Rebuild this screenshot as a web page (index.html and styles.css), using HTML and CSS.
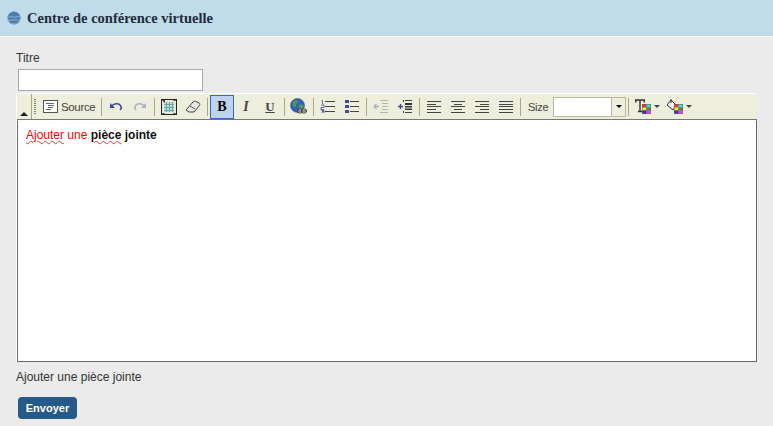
FILE: index.html
```html
<!DOCTYPE html>
<html lang="fr">
<head>
<meta charset="utf-8">
<title>Centre de conférence virtuelle</title>
<link rel="stylesheet" href="styles.css">
</head>
<body>
<header class="banner">
  <svg class="globe" width="14" height="14" viewBox="0 0 14 14"><circle cx="7" cy="7" r="6.500" fill="#4a7fb0"/><path d="M.8 6c3-.8 5 .5 8 0s3-.8 4.500-.4M.8 9c3 .8 6-.6 8.500 0s3 .4 4-.2" stroke="#8fb4d4" fill="none" stroke-width="1"/><path d="M3 12c2 .8 5 .8 8 0" stroke="#7ea6c8" fill="none"/></svg>
  <h1 class="banner-title">Centre de conférence virtuelle</h1>
</header>
<main class="content">
  <label class="field-label" for="titre">Titre</label>
  <input class="title-input" id="titre" type="text">
  <div class="editor">
    <div class="toolbar">
      <span class="collapser"><span class="collapse-arrow"></span></span>
      <span class="grip"></span>
      <span class="tool tool-source">
        <svg width="15" height="13" viewBox="0 0 15 13"><rect x=".5" y=".5" width="14" height="12" fill="#fff" stroke="#555"/><path d="M3 3.500h8M5 5.500h6M5 7.500h5M3 9.500h5" stroke="#666"/></svg>
        <span class="tool-text">Source</span>
      </span>
      <span class="sep"></span>
      <span class="tool"><svg width="14" height="12" viewBox="0 0 14 12"><path d="M1 2v5h5z" fill="#3b4aa0"/><path d="M3 5c2-2.500 6-3 8-1 1.500 1.500 1.500 3.500 0 5" fill="none" stroke="#3b4aa0" stroke-width="1.600"/></svg></span>
      <span class="tool"><svg width="14" height="12" viewBox="0 0 14 12"><path d="M13 2v5H8z" fill="#a9b0c4"/><path d="M11 5C9 2.500 5 2 3 4c-1.500 1.500-1.500 3.500 0 5" fill="none" stroke="#a9b0c4" stroke-width="1.600"/></svg></span>
      <span class="sep"></span>
      <span class="tool"><svg width="16" height="16" viewBox="0 0 16 16"><rect x=".5" y=".5" width="15" height="15" fill="#e8e8e0" stroke="#222"/><rect x="3" y="3" width="10" height="10" fill="#bfe0d8"/><path d="M3 5.500h10M3 8.500h10M3 11.500h10M5.500 3v10M8.500 3v10M11.500 3v10" stroke="#6aa8a8"/><path d="M1.500 1.500h2v2M12.500 1.500h2M1.500 14.500h2M12.500 14.500h2" stroke="#333"/></svg></span>
      <span class="tool"><svg width="16" height="16" viewBox="0 0 16 16"><path d="M1 11l7-8c1-1 2-1 3-.5l3 1.500c1 .7 1 1.500.5 2.500L9 13H4z" fill="#e6e6e0" stroke="#444"/><path d="M5 7l5 3" stroke="#555"/></svg></span>
      <span class="sep"></span>
      <span class="tool tool-on tool-bold">B</span>
      <span class="tool tool-italic">I</span>
      <span class="tool tool-underline">U</span>
      <span class="sep"></span>
      <span class="tool"><svg width="18" height="18" viewBox="0 0 18 18"><circle cx="7.500" cy="7.500" r="7" fill="#2f5fc0" stroke="#555" stroke-width=".6"/><path d="M3 4c2-2 4-2 5-1 0 2-2 2-2 4s-2 3-3 1zM9 7c2-1 4 0 5 1-1 3-3 4-4 3s-2-3-1-4z" fill="#4aa04a"/><rect x="7.500" y="11" width="5" height="4" rx="2" fill="#eeeedc" stroke="#333"/><rect x="11.500" y="11" width="5" height="4" rx="2" fill="#eeeedc" stroke="#333"/><path d="M8 13h8" stroke="#333"/></svg></span>
      <span class="sep"></span>
      <span class="tool"><svg width="16" height="13" viewBox="0 0 16 13"><path d="M5 1.500h10M5 6.500h10M5 11.500h10" stroke="#444"/><path d="M1.500.5h1v3.500M1 5h3v2.500H1V9.800h3M1 10h3v1.200H2h2V13H1" stroke="#3b4aa0" fill="none" stroke-width=".8"/></svg></span>
      <span class="tool"><svg width="16" height="13" viewBox="0 0 16 13"><path d="M6 1.500h9M6 6.500h9M6 11.500h9" stroke="#444"/><path d="M1 0h4v3H1zM1 5h4v3H1zM1 10h4v3H1z" fill="#3b4aa0"/></svg></span>
      <span class="sep"></span>
      <span class="tool"><svg width="16" height="13" viewBox="0 0 16 13"><path d="M7 .5h8M9 3.500h6M9 6.500h6M9 9.500h6M7 12.500h8" stroke="#b5b8a8"/><path d="M1 6.500h5M3.500 4 1 6.500 3.500 9" stroke="#a9b0c4" fill="none" stroke-width="1.300"/></svg></span>
      <span class="tool"><svg width="16" height="13" viewBox="0 0 16 13"><path d="M8 .5h7M8 12.500h7" stroke="#444"/><path d="M8 3h7v7H8z" fill="#333"/><path d="M8 5.500h7M8 8h7" stroke="#eeeedc"/><path d="M1 6.500h5M3.500 4v5" stroke="#3b4aa0" stroke-width="1.400"/><path d="M6.500 0v2M6.500 11v2" stroke="#444"/></svg></span>
      <span class="sep"></span>
      <span class="tool"><svg width="16" height="12" viewBox="0 0 16 12"><path d="M1 .5h14M1 3.500h9M1 5.500h14M1 8.500h9M1 11.500h14" stroke="#444"/></svg></span>
      <span class="tool"><svg width="16" height="12" viewBox="0 0 16 12"><path d="M1 .5h14M4 3.500h8M1 5.500h14M4 8.500h8M1 11.500h14" stroke="#444"/></svg></span>
      <span class="tool"><svg width="16" height="12" viewBox="0 0 16 12"><path d="M1 .5h14M6 3.500h9M1 5.500h14M6 8.500h9M1 11.500h14" stroke="#444"/></svg></span>
      <span class="tool"><svg width="16" height="12" viewBox="0 0 16 12"><path d="M1 .5h14M1 3.500h14M1 5.500h14M1 8.500h14M1 11.500h14" stroke="#444"/></svg></span>
      <span class="sep"></span>
      <span class="size-label">Size</span>
      <span class="size-select"><span class="size-value"></span><span class="size-drop"><span class="drop-arrow"></span></span></span>
      <span class="sep"></span>
      <span class="tool tool-color">
        <svg width="16" height="18" viewBox="0 0 16 18"><path d="M0 2h10M.8 1.500V4.500M9.200 1.500V4.500M5 2v11M3 13.500h4" stroke="#333" stroke-width="1.400" fill="none"/><rect x="7" y="6" width="9" height="10" fill="#666"/><rect x="7.500" y="6.500" width="4" height="3" fill="#e33"/><rect x="11.500" y="6.500" width="4" height="3" fill="#3dd"/><rect x="7.500" y="9.500" width="4" height="3" fill="#ee3"/><rect x="11.500" y="9.500" width="4" height="3" fill="#585"/><rect x="7.500" y="12.500" width="4" height="3" fill="#33c"/><rect x="11.500" y="12.500" width="4" height="3" fill="#e4d"/></svg>
        <span class="drop-arrow arrow-small"></span>
      </span>
      <span class="tool tool-color">
        <svg width="16" height="18" viewBox="0 0 16 18"><path d="M0 7l4-5 5 5-3 5z" fill="#eee" stroke="#333"/><path d="M4 1v4" stroke="#333"/><rect x="7" y="6" width="9" height="10" fill="#666"/><rect x="7.500" y="6.500" width="4" height="3" fill="#e33"/><rect x="11.500" y="6.500" width="4" height="3" fill="#3dd"/><rect x="7.500" y="9.500" width="4" height="3" fill="#ee3"/><rect x="11.500" y="9.500" width="4" height="3" fill="#585"/><rect x="7.500" y="12.500" width="4" height="3" fill="#33c"/><rect x="11.500" y="12.500" width="4" height="3" fill="#e4d"/></svg>
        <span class="drop-arrow arrow-small"></span>
      </span>
    </div>
    <div class="edit-area">
      <span class="red"><span class="squiggle">Ajouter</span> une</span> <b class="strong"><span class="squiggle">pièce</span> jointe</b>
    </div>
  </div>
  <p class="attach-label">Ajouter une pièce jointe</p>
  <button class="send" type="button">Envoyer</button>
</main>
</body>
</html>
```
FILE: styles.css
```css
* { box-sizing: border-box; }
html, body { margin: 0; padding: 0; }
body {
  width: 773px;
  height: 426px;
  overflow: hidden;
  background: #ebebeb;
  font-family: "Liberation Sans", Arial, sans-serif;
  font-size: 12px;
  color: #333;
}
.banner {
  height: 37px;
  background: #c0dbe9;
  border-bottom: 1px solid #fff;
  display: flex;
  align-items: center;
  padding-left: 7px;
  gap: 6px;
}
.banner-title {
  margin: 0;
  font-family: "Liberation Serif", "Times New Roman", serif;
  font-size: 14.5px;
  font-weight: bold;
  color: #1f2d3a;
}
.content {
  padding: 14px 16px 0 16px;
  display: flex;
  flex-direction: column;
  align-items: flex-start;
}
.field-label { line-height: 14px; height: 14px; color: #333; }
.title-input {
  width: 185px;
  height: 22px;
  margin: 4px 0 0 2px;
  border: 1px solid #a9a9a9;
  background: #fff;
  padding: 0;
}
.editor {
  width: 741px;
  margin: 2px 0 0 0;
  background: #fff;
  padding: 1px 0 0 1px;
}
.toolbar {
  height: 26px;
  background: #eeeedc;
  border-bottom: 1px solid #777;
  display: flex;
  align-items: center;
}
.collapser {
  width: 15px;
  height: 100%;
  border-right: 1px solid #a9a97f;
  display: flex;
  align-items: flex-end;
  justify-content: center;
  padding-bottom: 3px;
}
.collapse-arrow {
  width: 0; height: 0;
  border-left: 4px solid transparent;
  border-right: 4px solid transparent;
  border-bottom: 4px solid #222;
}
.grip {
  width: 6px;
  height: 16px;
  background: repeating-linear-gradient(to bottom, #8a8a60 0 1px, transparent 1px 2px) 2px 0 / 2px 100% no-repeat;
}
.tool {
  width: 24px;
  height: 24px;
  flex: none;
  display: flex;
  align-items: center;
  justify-content: center;
  color: #333;
}
.tool-source { width: 61px; justify-content: flex-start; padding-left: 5px; gap: 3px; }
.tool-text { color: #444; font-size: 11.500px; letter-spacing: -.35px; }
.sep {
  width: 5px;
  height: 18px;
  flex: none;
  background: linear-gradient(#a9a97f, #a9a97f) center / 1px 100% no-repeat;
}
.tool-on { background: #bfd3ec; border: 1px solid #316ac5; }
.tool-bold { font: bold 14px "Liberation Serif", serif; color: #000; }
.tool-italic { font: italic bold 14px "Liberation Serif", serif; color: #444; }
.tool-underline { font: bold 13px "Liberation Serif", serif; color: #444; text-decoration: underline; }
.size-label { margin-left: 5px; width: 25px; flex: none; color: #444; font-size: 11px; letter-spacing: -.3px; }
.size-select {
  width: 73px;
  height: 20px;
  flex: none;
  display: flex;
  background: #fff;
  border: 1px solid #b9b99f;
}
.size-value { flex: 1; }
.size-drop {
  width: 14px;
  background: #eeeedc;
  border-left: 1px solid #b9b99f;
  display: flex;
  align-items: center;
  justify-content: center;
}
.drop-arrow {
  width: 0; height: 0;
  border-left: 3px solid transparent;
  border-right: 3px solid transparent;
  border-top: 3px solid #000;
}
.arrow-small { border-top-color: #444; margin-left: 3px; }
.tool-color { width: 32px; justify-content: flex-start; padding-left: 4px; }
.edit-area {
  height: 242px;
  background: #fff;
  border: 1px solid #696969;
  border-top-color: #fff;
  padding: 6px 8px;
  font-size: 12px;
  line-height: 16px;
  color: #000;
}
.red { color: #f00; }
.strong { font-weight: bold; color: #111; }
.squiggle { text-decoration: underline wavy #e33 1px; text-underline-offset: 1px; }
.attach-label { margin: 8px 0 0 0; line-height: 14px; color: #333; }
.send {
  width: 59px;
  height: 22px;
  margin: 13px 0 0 2px;
  border: 0;
  border-radius: 4px;
  background: #265a8a;
  color: #fff;
  font: bold 11px "Liberation Sans", Arial, sans-serif;
  padding: 0;
}
```
